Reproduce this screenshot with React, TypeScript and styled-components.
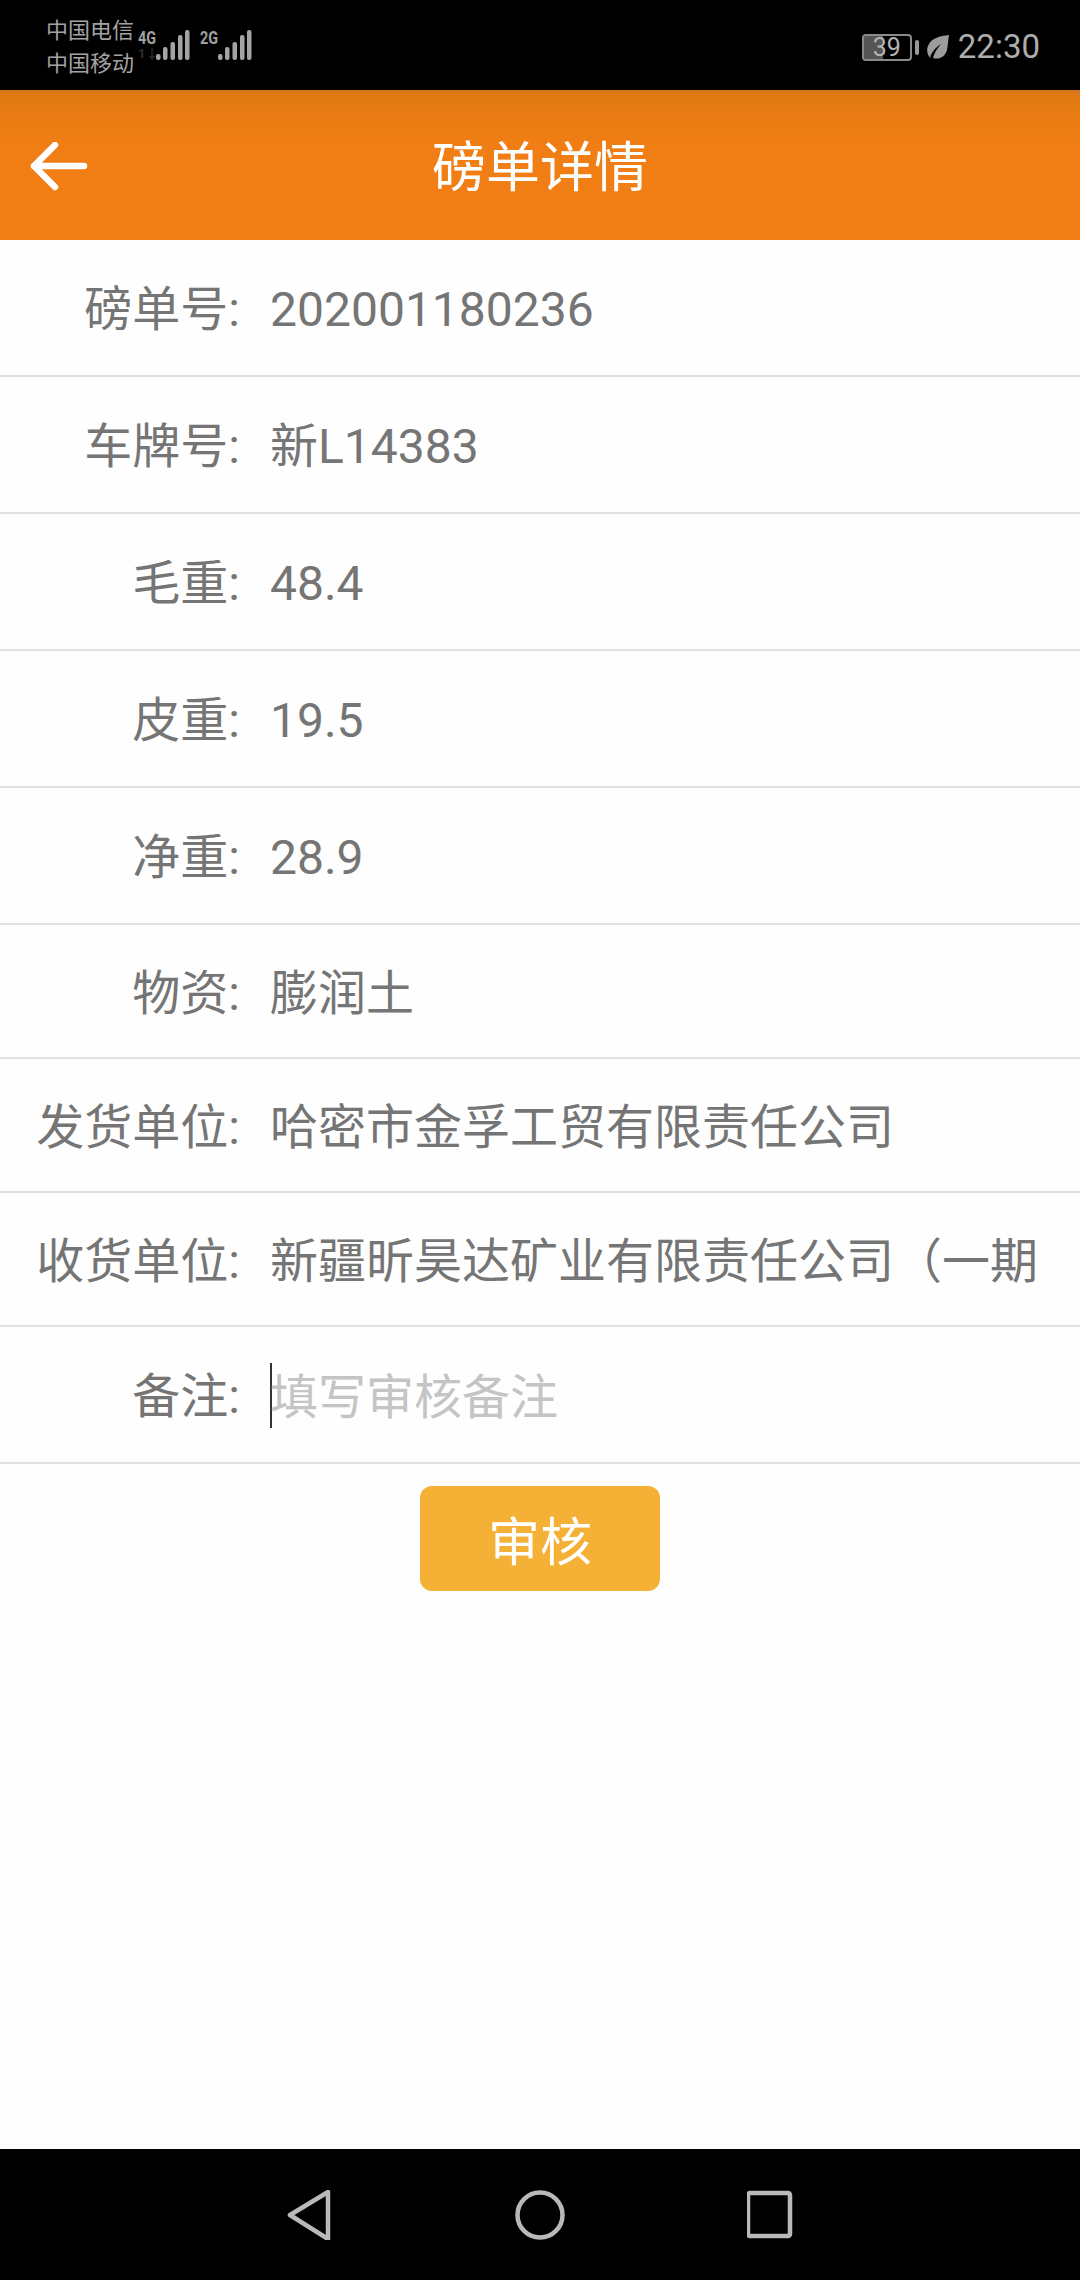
import React from "react";
import styled, { createGlobalStyle } from "styled-components";

const Global = createGlobalStyle`
  html, body { margin: 0; padding: 0; background: #fff; }
  body { font-family: Roboto, "Noto Sans CJK SC", sans-serif; }
  * { box-sizing: border-box; }
`;

const Page = styled.div`
  width: 1080px;
  height: 2280px;
  display: flex;
  flex-direction: column;
  overflow: hidden;
  background: #fefefe;
`;

const StatusBar = styled.div`
  height: 90px;
  background: #000;
  display: flex;
  justify-content: space-between;
  align-items: flex-start;
  padding: 14px 40px 0 46px;
  color: #a9a9a9;
`;

const StatusLeft = styled.div`
  display: flex;
  align-items: flex-start;
`;

const Carriers = styled.div`
  display: flex;
  flex-direction: column;
  width: 92px;
  font-size: 22px;
  line-height: 33px;
  color: #a2a2a2;
`;

const SignalGroup = styled.div<{ $gap: number }>`
  display: flex;
  align-items: flex-start;
  margin-top: 16px;
  margin-right: ${(p) => p.$gap}px;
`;

const NetLabels = styled.div`
  display: flex;
  flex-direction: column;
  align-items: flex-start;
  width: 18px;
  font-weight: 700;
  font-size: 18px;
  line-height: 15px;
  color: #a0a0a0;
`;

const NetText = styled.span`
  display: inline-block;
  transform: scaleX(0.8);
  transform-origin: left center;
`;

const DimLabel = styled.span`
  font-size: 13px;
  line-height: 18px;
  color: #2e2e2e;
`;

const StatusRight = styled.div`
  display: flex;
  align-items: center;
  margin-top: 18px;
`;

const Battery = styled.div`
  width: 50px;
  height: 27px;
  border: 2px solid #8a8a8a;
  border-radius: 4px;
  font-size: 25px;
  line-height: 23px;
  text-align: center;
  color: #b4b4b4;
  background: linear-gradient(to right, #555 0 42%, #000 42% 100%);
  background-clip: content-box;
`;

const BatteryNub = styled.div`
  width: 4px;
  height: 15px;
  margin-left: 3px;
  border-radius: 2px;
  background: #999;
`;

const Leaf = styled.svg`
  width: 24px;
  height: 26px;
  margin-left: 7px;
`;

const Clock = styled.div`
  margin-left: 8px;
  font-size: 33px;
  line-height: 30px;
  color: #adadad;
`;

const Header = styled.header`
  height: 150px;
  display: grid;
  grid-template-columns: 1fr auto 1fr;
  align-items: center;
  color: #fff;
  background: linear-gradient(to bottom, #d5761c 0, #e17a12 6px, #ea7c13 30px, #f17e15 60px, #f27f15 100%);
`;

const BackIcon = styled.svg`
  width: 60px;
  height: 50px;
  margin: 3px 0 0 30px;
  display: block;
`;

const Title = styled.h1`
  margin: 8px 0 0;
  font-weight: 400;
  font-size: 54px;
  line-height: 70px;
  color: #fff;
`;

const List = styled.main`
  flex: 1;
  display: flex;
  flex-direction: column;
`;

const Row = styled.div<{ $h: number }>`
  height: ${(p) => p.$h}px;
  display: flex;
  align-items: center;
  padding-top: 5px;
  border-bottom: 2px solid #e2e2e2;
  font-size: 48px;
  line-height: 64px;
  color: #757575;
  white-space: nowrap;
`;

const Label = styled.div`
  width: 240px;
  flex: none;
  text-align: right;
`;

const Value = styled.div`
  margin-left: 30px;
  width: 780px;
  overflow: hidden;
`;

const Caret = styled.div`
  width: 2px;
  height: 65px;
  flex: none;
  margin: -4px 0 0 30px;
  background: #333;
`;

const NoteInput = styled.input`
  flex: 1;
  min-width: 0;
  height: 64px;
  border: 0;
  outline: 0;
  padding: 0;
  margin: 2px 20px 0 -2px;
  background: transparent;
  font: inherit;
  color: #757575;
  &::placeholder { color: #c4c4c4; opacity: 1; }
`;

const Actions = styled.div`
  display: flex;
  justify-content: center;
  padding-top: 22px;
`;

const ApproveButton = styled.button`
  width: 240px;
  height: 105px;
  border: 0;
  border-radius: 12px;
  background: #f5b036;
  color: #fff;
  font-family: inherit;
  font-size: 52px;
  padding: 0;
`;

const NavBar = styled.nav`
  height: 131px;
  background: #000;
  display: flex;
  justify-content: center;
  align-items: flex-start;
  padding-top: 41px;
  gap: 182px;
`;

const NavIcon = styled.svg`
  width: 50px;
  height: 50px;
  display: block;
  fill: none;
  stroke: #b9b9b9;
  stroke-width: 4.5;
  stroke-linejoin: round;
`;

const Bars = () => (
  <svg width="34" height="30" viewBox="0 0 34 30" fill="#a3a3a3">
    <rect x="0" y="24" width="4.5" height="6" rx="2" />
    <rect x="7" y="17" width="4.5" height="13" rx="2" />
    <rect x="14.5" y="12" width="4.5" height="18" rx="2" />
    <rect x="22" y="5" width="4.5" height="25" rx="2" />
    <rect x="29" y="0" width="4.5" height="30" rx="2" />
  </svg>
);

const rows: { label: string; value: string; h: number }[] = [
  { label: "磅单号:", value: "202001180236", h: 137 },
  { label: "车牌号:", value: "新L14383", h: 137 },
  { label: "毛重:", value: "48.4", h: 137 },
  { label: "皮重:", value: "19.5", h: 137 },
  { label: "净重:", value: "28.9", h: 137 },
  { label: "物资:", value: "膨润土", h: 134 },
  { label: "发货单位:", value: "哈密市金孚工贸有限责任公司", h: 134 },
  { label: "收货单位:", value: "新疆昕昊达矿业有限责任公司（一期", h: 134 },
];

export default function App() {
  return (
    <Page>
      <Global />
      <StatusBar>
        <StatusLeft>
          <Carriers>
            <span>中国电信</span>
            <span>中国移动</span>
          </Carriers>
          <SignalGroup $gap={10}>
            <NetLabels>
              <NetText>4G</NetText>
              <DimLabel>1↓</DimLabel>
            </NetLabels>
            <Bars />
          </SignalGroup>
          <SignalGroup $gap={0}>
            <NetLabels>
              <NetText>2G</NetText>
            </NetLabels>
            <Bars />
          </SignalGroup>
        </StatusLeft>
        <StatusRight>
          <Battery>39</Battery>
          <BatteryNub />
          <Leaf viewBox="0 0 24 26">
            <path d="M23 1C14 2 5 4 2 12c-2 5 0 9 2 12 1-5 5-10 11-14-4 5-7 9-8 14 6 2 12-1 14-8 1-5 1-10 2-15z" fill="#9c9c9c" />
          </Leaf>
          <Clock>22:30</Clock>
        </StatusRight>
      </StatusBar>
      <Header>
        <BackIcon viewBox="0 0 60 50" fill="none" stroke="#fff" strokeWidth="6.5" strokeLinecap="round" strokeLinejoin="round">
          <path d="M4 24h50M25 3L4 24l21 21" />
        </BackIcon>
        <Title>磅单详情</Title>
      </Header>
      <List>
        {rows.map((r) => (
          <Row key={r.label} $h={r.h}>
            <Label>{r.label}</Label>
            <Value>{r.value}</Value>
          </Row>
        ))}
        <Row $h={137}>
          <Label>备注:</Label>
          <Caret />
          <NoteInput placeholder="填写审核备注" />
        </Row>
        <Actions>
          <ApproveButton>审核</ApproveButton>
        </Actions>
      </List>
      <NavBar>
        <NavIcon viewBox="0 0 50 50">
          <path d="M7 25L45 2v47z" />
        </NavIcon>
        <NavIcon viewBox="0 0 50 50">
          <circle cx="25" cy="25" r="22.5" />
        </NavIcon>
        <NavIcon viewBox="0 0 50 50">
          <rect x="1" y="3" width="42" height="43" rx="2" />
        </NavIcon>
      </NavBar>
    </Page>
  );
}
